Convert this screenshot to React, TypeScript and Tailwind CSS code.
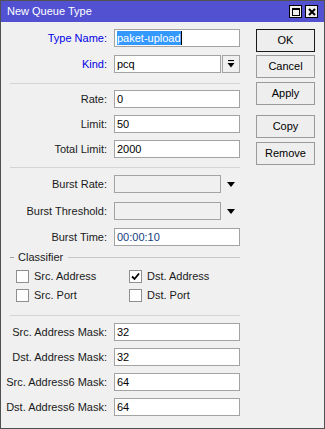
import React from 'react';

const font = { fontFamily: '"Liberation Sans", Arial, sans-serif' };

// одна строка формы: подпись + поле
const Row: React.FC<{ label: string; blue?: boolean; className?: string; children: React.ReactNode }> = ({ label, blue, className, children }) => (
  <div className={`flex h-[18px] items-center ${className || ''}`}>
    <div className={`w-[97px] shrink-0 whitespace-nowrap flex justify-end text-[11px] leading-[18px] ${blue ? 'text-[#0000e6]' : 'text-[#1a1a1a]'}`}>
      {label}
    </div>
    <div className="ml-[7px] flex h-[18px] items-center">{children}</div>
  </div>
);

const Field: React.FC<{ value?: string; w?: string; disabled?: boolean; color?: string }> = ({ value, w = 'w-[126px]', disabled, color }) => (
  <div
    className={`${w} h-[18px] border border-[#a3a3a3] ${disabled ? 'bg-[#f0f0f0]' : 'bg-white'} pl-[2px] text-[11px] leading-[16px] ${color || 'text-black'}`}
  >
    {value}
  </div>
);

const Sep: React.FC<{ className?: string }> = ({ className }) => <div className={`h-px w-[230px] bg-[#d4d4d4] ${className || ''}`} />;

const Tri = () => (
  <svg width="8" height="5" viewBox="0 0 8 5" className="ml-[6px]">
    <path d="M0 0H8L4 5Z" fill="#000" />
  </svg>
);

const Check: React.FC<{ checked?: boolean; label: string }> = ({ checked, label }) => (
  <div className="flex items-center h-[13px]">
    <div className="w-[13px] h-[13px] border border-[#8f8f8f] bg-white flex items-center justify-center">
      {checked && (
        <svg width="9" height="9" viewBox="0 0 9 9">
          <path d="M1 4.5L3.5 7L8 1.5" stroke="#000" strokeWidth="1.8" fill="none" />
        </svg>
      )}
    </div>
    <span className="ml-[5px] text-[11px] text-[#1a1a1a] leading-[13px]">{label}</span>
  </div>
);

const Btn: React.FC<{ label: string; main?: boolean; className?: string }> = ({ label, main, className }) => (
  <div
    className={`w-[59px] h-[23px] flex items-center justify-center bg-[#eeeeee] text-[11px] text-black border ${main ? 'border-[#1a1a1a]' : 'border-[#9a9a9a]'} ${className || ''}`}
  >
    {label}
  </div>
);

export default function App() {
  return (
    <div style={font} className="w-[325px] h-[429px] border border-[#505050] bg-[#f0f0f0] flex flex-col overflow-hidden">
      {/* заголовок окна */}
      <div className="h-[21px] bg-[#5151d1] flex items-center justify-between shrink-0">
        <span className="pl-[6px] text-white text-[11px]">New Queue Type</span>
        <div className="flex gap-[3px] mr-[6px]">
          <div className="w-[13px] h-[13px] bg-[#f0f0f0] border border-black flex items-center justify-center">
            <div className="w-[8px] h-[8px] border border-black border-t-2" />
          </div>
          <div className="w-[13px] h-[13px] bg-[#f0f0f0] border border-black flex items-center justify-center">
            <svg width="8" height="8" viewBox="0 0 8 8">
              <path d="M1 1L7 7M7 1L1 7" stroke="#000" strokeWidth="2" />
            </svg>
          </div>
        </div>
      </div>

      <div className="flex pt-[7px] pl-[9px]">
        {/* форма */}
        <div className="flex flex-col w-[230px]">
          <Row label="Type Name:" blue>
            <div className="w-[126px] h-[18px] border border-[#a3a3a3] bg-white pl-[2px] flex items-center">
              <span className="bg-[#3399ff] text-white text-[11px] leading-[14px] h-[14px]">paket-upload</span>
              <span className="w-px h-[14px] bg-black" />
            </div>
          </Row>
          <Row label="Kind:" blue className="mt-[8px]">
            <Field value="pcq" w="w-[107px]" />
            <div className="ml-px w-[18px] h-[18px] border border-[#a3a3a3] bg-[#f0f0f0] flex items-center justify-center">
              <svg width="8" height="8" viewBox="0 0 8 8">
                <path d="M1 0.5H7" stroke="#000" strokeWidth="1.2" />
                <path d="M0.5 3H7.5L4 7.5Z" fill="#000" />
              </svg>
            </div>
          </Row>
          <Sep className="mt-[10px]" />
          <Row label="Rate:" className="mt-[6px]">
            <Field value="0" />
          </Row>
          <Row label="Limit:" className="mt-[7px]">
            <Field value="50" />
          </Row>
          <Row label="Total Limit:" className="mt-[7px]">
            <Field value="2000" />
          </Row>
          <Sep className="mt-[9px]" />
          <Row label="Burst Rate:" className="mt-[7px]">
            <Field w="w-[107px]" disabled />
            <Tri />
          </Row>
          <Row label="Burst Threshold:" className="mt-[9px]">
            <Field w="w-[107px]" disabled />
            <Tri />
          </Row>
          <Row label="Burst Time:" className="mt-[8px]">
            <Field value="00:00:10" color="text-[#12407e]" />
          </Row>

          {/* группа Classifier */}
          <div className="mt-[4px] flex items-center h-[14px]">
            <div className="w-[4px] h-px bg-[#a0a0a0]" />
            <span className="ml-[4px] text-[11px] text-[#1a1a1a] leading-[14px]">Classifier</span>
            <div className="ml-[5px] flex-1 h-px bg-[#c8c8c8]" />
          </div>
          <div className="mt-[6px] grid grid-cols-[113px_1fr] gap-y-[6px] pl-[6px]">
            <Check label="Src. Address" />
            <Check label="Dst. Address" checked />
            <Check label="Src. Port" />
            <Check label="Dst. Port" />
          </div>
          <Sep className="mt-[13px]" />
          <Row label="Src. Address Mask:" className="mt-[7px]">
            <Field value="32" />
          </Row>
          <Row label="Dst. Address Mask:" className="mt-[7px]">
            <Field value="32" />
          </Row>
          <Row label="Src. Address6 Mask:" className="mt-[7px]">
            <Field value="64" />
          </Row>
          <Row label="Dst. Address6 Mask:" className="mt-[7px]">
            <Field value="64" />
          </Row>
        </div>

        {/* кнопки */}
        <div className="ml-[16px] flex flex-col">
          <Btn label="OK" main />
          <Btn label="Cancel" className="mt-[3px] h-[22px]" />
          <Btn label="Apply" className="mt-[4px] h-[22px]" />
          <Btn label="Copy" className="mt-[10px] h-[22px]" />
          <Btn label="Remove" className="mt-[4px]" />
        </div>
      </div>
    </div>
  );
}
